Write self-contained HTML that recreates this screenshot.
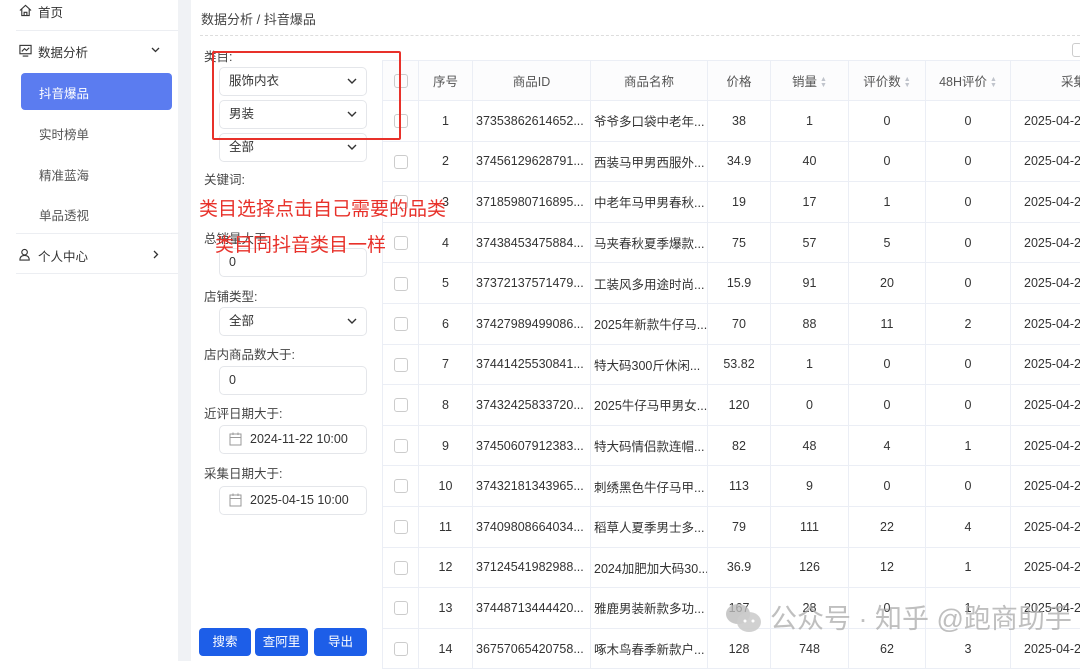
<!DOCTYPE html>
<html><head><meta charset="utf-8"><style>
*{margin:0;padding:0;box-sizing:border-box}
body{width:1080px;height:661px;overflow:hidden;background:#fff;font-family:"Liberation Sans","Noto Sans CJK SC",sans-serif;font-size:13px;color:#333;position:relative}
.a{position:absolute}
.side{left:0;top:0;width:178px;height:661px;background:#fff}
.gap{left:178px;top:0;width:13px;height:661px;background:#f0f2f5}
.mi{position:absolute;left:38px;font-size:12.5px;color:#333}
.sub{position:absolute;left:39px;font-size:12.5px;color:#555}
.hr{position:absolute;left:16px;width:162px;height:1px;background:#eceef2}
.lbl{position:absolute;left:204px;font-size:12.5px;color:#444}
.inp{position:absolute;left:219px;width:148px;height:29px;border:1px solid #e4e6ea;border-radius:5px;background:#fff;font-size:12.5px;padding-left:9px;line-height:27px;color:#333}
.inp svg{position:absolute;right:9px;top:10px}
.btn{position:absolute;top:628px;height:28px;background:#1d5ee8;color:#fff;border-radius:4px;font-size:12.5px;text-align:center;line-height:28px}
table{position:absolute;left:382px;top:60px;border-collapse:collapse;table-layout:fixed;width:720px}
td,th{border:1px solid #ebeef5;text-align:center;font-size:12.5px;font-weight:normal;white-space:nowrap;overflow:hidden;color:#333}
th{height:40px;background:#fcfcfd;color:#555}
td{height:40.6px}
.cb{display:inline-block;width:14px;height:14px;border:1px solid #ccc;border-radius:3px;vertical-align:middle}
td.l{text-align:left;padding-left:3px}
.so{display:inline-block;font-size:7px;line-height:6px;color:#c0c4cc;vertical-align:middle;margin-left:3px}
.red{position:absolute;color:#e8312a;font-size:19px}
</style></head><body>
<div class="a side"></div>
<div class="a gap"></div>
<svg class="a" style="left:19px;top:4px" width="13" height="13" viewBox="0 0 14 14" fill="none" stroke="#333" stroke-width="1.2"><path d="M1 7L7 1.5L13 7M3 5.5V12.5H11V5.5M5.5 12.5V9H8.5V12.5"/></svg>
<div class="mi" style="top:2px">首页</div>
<div class="hr" style="top:30px"></div>
<svg class="a" style="left:19px;top:44px" width="13" height="13" viewBox="0 0 14 14" fill="none" stroke="#333" stroke-width="1.2"><rect x="1" y="1.5" width="12" height="9"/><path d="M3 8L6 5L8 7L11 4M4 13H10"/></svg>
<div class="mi" style="top:42px">数据分析</div>
<svg class="a" style="left:151px;top:47px" width="9" height="6" viewBox="0 0 9 6" fill="none" stroke="#333" stroke-width="1.3"><path d="M1 1L4.5 4.5L8 1"/></svg>
<div class="a" style="left:21px;top:73px;width:151px;height:37px;background:#5b7cf0;border-radius:4px"></div>
<div class="sub" style="top:83px;color:#fff">抖音爆品</div>
<div class="sub" style="top:124px">实时榜单</div>
<div class="sub" style="top:165px">精准蓝海</div>
<div class="sub" style="top:205px">单品透视</div>
<div class="hr" style="top:233px"></div>
<svg class="a" style="left:19px;top:248px" width="13" height="13" viewBox="0 0 14 14" fill="none" stroke="#333" stroke-width="1.2"><circle cx="6" cy="4.5" r="3"/><path d="M1 13C1 9.5 3 8 6 8S11 9.5 11 13Z"/></svg>
<div class="mi" style="top:246px">个人中心</div>
<svg class="a" style="left:153px;top:250px" width="6" height="9" viewBox="0 0 6 9" fill="none" stroke="#333" stroke-width="1.3"><path d="M1 1L4.5 4.5L1 8"/></svg>
<div class="hr" style="top:273px"></div>

<div class="a" style="left:201px;top:9px;font-size:13px;color:#444">数据分析 / 抖音爆品</div>
<div class="a" style="left:200px;top:35px;width:880px;border-top:1px dashed #ddd"></div>
<div class="a" style="left:1072px;top:43px;width:10px;height:14px;border:1px solid #ccc;border-radius:3px"></div>

<div class="lbl" style="top:46px">类目:</div>
<div class="inp" style="top:67px">服饰内衣<svg width="10" height="6" viewBox="0 0 10 6" fill="none" stroke="#333" stroke-width="1.4"><path d="M1 1L5 5L9 1"/></svg></div>
<div class="inp" style="top:100px">男装<svg width="10" height="6" viewBox="0 0 10 6" fill="none" stroke="#333" stroke-width="1.4"><path d="M1 1L5 5L9 1"/></svg></div>
<div class="inp" style="top:133px">全部<svg width="10" height="6" viewBox="0 0 10 6" fill="none" stroke="#333" stroke-width="1.4"><path d="M1 1L5 5L9 1"/></svg></div>
<div class="lbl" style="top:169px">关键词:</div>
<div class="lbl" style="top:228px">总销量大于:</div>
<div class="inp" style="top:248px">0</div>
<div class="lbl" style="top:286px">店铺类型:</div>
<div class="inp" style="top:307px">全部<svg width="10" height="6" viewBox="0 0 10 6" fill="none" stroke="#333" stroke-width="1.4"><path d="M1 1L5 5L9 1"/></svg></div>
<div class="lbl" style="top:344px">店内商品数大于:</div>
<div class="inp" style="top:366px">0</div>
<div class="lbl" style="top:403px">近评日期大于:</div>
<div class="inp" style="top:425px;padding-left:30px">2024-11-22 10:00</div>
<div class="lbl" style="top:463px">采集日期大于:</div>
<div class="inp" style="top:486px;padding-left:30px">2025-04-15 10:00</div>
<svg class="a" style="left:229px;top:432px" width="13" height="14" viewBox="0 0 13 14" fill="none" stroke="#999"><rect x="1" y="2" width="11" height="11"/><path d="M1 5.5H12M4 0.5V3M9 0.5V3"/></svg>
<svg class="a" style="left:229px;top:493px" width="13" height="14" viewBox="0 0 13 14" fill="none" stroke="#999"><rect x="1" y="2" width="11" height="11"/><path d="M1 5.5H12M4 0.5V3M9 0.5V3"/></svg>
<div class="btn" style="left:199px;width:52px">搜索</div>
<div class="btn" style="left:255px;width:53px">查阿里</div>
<div class="btn" style="left:314px;width:53px">导出</div>

<table>
<colgroup><col style="width:36px"><col style="width:54px"><col style="width:118px"><col style="width:117px"><col style="width:63px"><col style="width:78px"><col style="width:77px"><col style="width:85px"><col style="width:92px"></colgroup>
<tr><th><span class="cb"></span></th><th>序号</th><th>商品ID</th><th>商品名称</th><th>价格</th><th>销量<span class="so">▲<br>▼</span></th><th>评价数<span class="so">▲<br>▼</span></th><th>48H评价<span class="so">▲<br>▼</span></th><th style="text-align:left;padding-left:50px">采集</th></tr>
<tr><td><span class="cb"></span></td><td>1</td><td class="l">37353862614652...</td><td class="l">爷爷多口袋中老年...</td><td>38</td><td>1</td><td>0</td><td>0</td><td class="l" style="padding-left:13px">2025-04-2</td></tr>
<tr><td><span class="cb"></span></td><td>2</td><td class="l">37456129628791...</td><td class="l">西装马甲男西服外...</td><td>34.9</td><td>40</td><td>0</td><td>0</td><td class="l" style="padding-left:13px">2025-04-2</td></tr>
<tr><td><span class="cb"></span></td><td>3</td><td class="l">37185980716895...</td><td class="l">中老年马甲男春秋...</td><td>19</td><td>17</td><td>1</td><td>0</td><td class="l" style="padding-left:13px">2025-04-2</td></tr>
<tr><td><span class="cb"></span></td><td>4</td><td class="l">37438453475884...</td><td class="l">马夹春秋夏季爆款...</td><td>75</td><td>57</td><td>5</td><td>0</td><td class="l" style="padding-left:13px">2025-04-2</td></tr>
<tr><td><span class="cb"></span></td><td>5</td><td class="l">37372137571479...</td><td class="l">工装风多用途时尚...</td><td>15.9</td><td>91</td><td>20</td><td>0</td><td class="l" style="padding-left:13px">2025-04-2</td></tr>
<tr><td><span class="cb"></span></td><td>6</td><td class="l">37427989499086...</td><td class="l">2025年新款牛仔马...</td><td>70</td><td>88</td><td>11</td><td>2</td><td class="l" style="padding-left:13px">2025-04-2</td></tr>
<tr><td><span class="cb"></span></td><td>7</td><td class="l">37441425530841...</td><td class="l">特大码300斤休闲...</td><td>53.82</td><td>1</td><td>0</td><td>0</td><td class="l" style="padding-left:13px">2025-04-2</td></tr>
<tr><td><span class="cb"></span></td><td>8</td><td class="l">37432425833720...</td><td class="l">2025牛仔马甲男女...</td><td>120</td><td>0</td><td>0</td><td>0</td><td class="l" style="padding-left:13px">2025-04-2</td></tr>
<tr><td><span class="cb"></span></td><td>9</td><td class="l">37450607912383...</td><td class="l">特大码情侣款连帽...</td><td>82</td><td>48</td><td>4</td><td>1</td><td class="l" style="padding-left:13px">2025-04-2</td></tr>
<tr><td><span class="cb"></span></td><td>10</td><td class="l">37432181343965...</td><td class="l">刺绣黑色牛仔马甲...</td><td>113</td><td>9</td><td>0</td><td>0</td><td class="l" style="padding-left:13px">2025-04-2</td></tr>
<tr><td><span class="cb"></span></td><td>11</td><td class="l">37409808664034...</td><td class="l">稻草人夏季男士多...</td><td>79</td><td>111</td><td>22</td><td>4</td><td class="l" style="padding-left:13px">2025-04-2</td></tr>
<tr><td><span class="cb"></span></td><td>12</td><td class="l">37124541982988...</td><td class="l">2024加肥加大码30...</td><td>36.9</td><td>126</td><td>12</td><td>1</td><td class="l" style="padding-left:13px">2025-04-2</td></tr>
<tr><td><span class="cb"></span></td><td>13</td><td class="l">37448713444420...</td><td class="l">雅鹿男装新款多功...</td><td>167</td><td>28</td><td>0</td><td>1</td><td class="l" style="padding-left:13px">2025-04-2</td></tr>
<tr><td><span class="cb"></span></td><td>14</td><td class="l">36757065420758...</td><td class="l">啄木鸟春季新款户...</td><td>128</td><td>748</td><td>62</td><td>3</td><td class="l" style="padding-left:13px">2025-04-2</td></tr>
</table>

<div class="a" style="left:212px;top:51px;width:189px;height:89px;border:2px solid #e8312a;border-radius:2px"></div>
<div class="red" style="left:199px;top:194px">类目选择点击自己需要的品类</div>
<div class="red" style="left:215px;top:230px">类目同抖音类目一样</div>

<svg class="a" style="left:724px;top:601px" width="40" height="34" viewBox="0 0 40 34"><ellipse cx="14" cy="13" rx="12" ry="10" fill="#bbb" opacity=".8"/><ellipse cx="25" cy="21" rx="12" ry="10" fill="#ccc" opacity=".9"/><circle cx="21" cy="20" r="1.5" fill="#fff"/><circle cx="29" cy="20" r="1.5" fill="#fff"/></svg>
<div class="a" style="left:770px;top:597px;font-size:27px;color:rgba(170,170,170,.75)">公众号 · 知乎 @跑商助手</div>
</body></html>
